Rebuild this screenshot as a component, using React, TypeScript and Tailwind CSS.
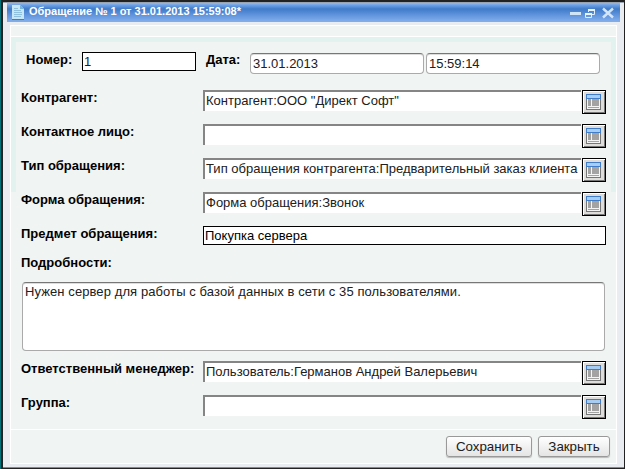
import type { ReactNode } from 'react';

function TableIcon() {
  return (
    <svg className="shrink-0" width="16" height="17" viewBox="0 0 16 17" shapeRendering="crispEdges">
      <rect x="0" y="0" width="15" height="16" fill="#777" />
      <rect x="1" y="5" width="13" height="10" fill="#f4f4f4" />
      <rect x="0" y="0" width="15" height="5" fill="#3f7dca" />
      <rect x="1" y="1" width="13" height="3" fill="#a8cdf2" />
      <rect x="2" y="5" width="3" height="7" fill="#a3a3a3" />
      <rect x="6" y="5" width="7" height="7" fill="#a3a3a3" />
      <rect x="2" y="13" width="11" height="1" fill="#a3a3a3" />
    </svg>
  );
}

function Label({ children }: { children: ReactNode }) {
  return <div className="w-[182px] shrink-0 whitespace-nowrap font-bold leading-4 text-black">{children}</div>;
}

function LookupRow({ label, value = '' }: { label: string; value?: string }) {
  return (
    <div className="flex h-[34px] items-start">
      <Label>{label}</Label>
      <div className="flex h-[21px] w-[378px] items-start whitespace-nowrap border-l-2 border-t-2 border-[#858585] bg-white pl-px pt-px leading-4">
        {value}
      </div>
      <button className="ml-px flex h-6 w-6 shrink-0 items-start border border-black bg-[#deddda] pl-[3px] pt-[3px] shadow-[inset_1px_1px_0_#fff,inset_-1px_-1px_0_#777]">
        <TableIcon />
      </button>
    </div>
  );
}

const rounded =
  'rounded-[4px] border border-[#aaa] border-t-[#777] bg-white shadow-[inset_0_1px_0_#ddd]';
const action =
  'flex h-[21px] items-center justify-center rounded-[3px] border border-[#999] bg-gradient-to-b from-white to-[#e4e4e4] text-[13.33px] leading-4 shadow-[0_1px_1px_#bbb]';

export default function App() {
  return (
    <div className="flex h-[469px] w-[625px] overflow-hidden border-l border-[#007078] bg-[#222] pb-px pl-[2px] pr-px pt-[2px] font-['Liberation_Sans',Arial,sans-serif] text-[13px] text-[#202020]">
      <div className="flex w-full flex-col border-b border-t border-b-[#888] border-t-[#99a4b3] bg-[#e9edf2] pl-1 pr-1">
        <header className="flex h-[19px] shrink-0 items-start bg-[linear-gradient(#8fb9ee_0px,#6298df_3px,#407bc9_6px,#6094dc_12px,#80acea_18px)]">
          <svg className="ml-[5px] mt-px" width="12" height="17" viewBox="0 0 12 17">
            <path d="M0 1h8l4 4v10H0z" fill="#c7e7f5" />
            <path d="M8 1v4h4" fill="#76b5dc" />
            <path d="M2 4.5h4M2 6.5h7M2 8.5h8M2 10.5h8M2 12.5h7" stroke="#8fc0de" />
            <path d="M0 15.5h12" stroke="#417bba" />
          </svg>
          <div className="ml-[5px] whitespace-nowrap text-[11px] font-bold leading-4 text-white">
            Обращение № 1 от 31.01.2013 15:59:08*
          </div>
          <svg className="ml-auto mr-[5px]" width="46" height="19" viewBox="0 0 46 19">
            <path d="M1 10.5h11" stroke="#d0e4f8" strokeWidth="3" />
            <path d="M19.5 9V6.5h6v5H23M16.5 10.5h6v4h-6z" fill="none" stroke="#e1eefb" />
            <path d="M19 7h7M16 11h7" fill="none" stroke="#e8f3fc" strokeWidth="2" />
            <path d="M34 5.5l10 9M44 5.5l-10 9" stroke="#d3e5fa" strokeWidth="2.4" />
          </svg>
        </header>
        <main className="ml-[3px] mr-[3px] mt-[3px] h-[439px] w-[607px] shrink-0 border border-white bg-[#f0f4f3]">
          <div className="h-[11px] border-b border-white" />
          <div className="h-[155px] border-x-[5px] border-t-[5px] border-[#e2f2ee]">
            <section className="w-[590px] pl-[5px]">
              <div className="flex h-[48px] items-start">
                <div className="ml-[5px] mt-[10px] w-[56px] font-bold leading-4 text-black">Номер:</div>
                <div className="mt-[10px] flex h-[19px] w-[114px] items-center border border-black bg-white pl-px leading-4">1</div>
                <div className="ml-[10px] mt-[10px] w-11 font-bold leading-4 text-black">Дата:</div>
                <div className={`${rounded} mt-[11px] flex h-[21px] w-[174px] items-center pl-[2px]`}>31.01.2013</div>
                <div className={`${rounded} ml-[2px] mt-[11px] flex h-[21px] w-[174px] items-center pl-[2px]`}>15:59:14</div>
              </div>
              <LookupRow label="Контрагент:" value={'Контрагент:ООО "Директ Софт"'} />
              <LookupRow label="Контактное лицо:" />
              <LookupRow label="Тип обращения:" value="Тип обращения контрагента:Предварительный заказ клиента" />
              <LookupRow label="Форма обращения:" value="Форма обращения:Звонок" />
              <div className="flex h-[29px] items-start">
                <Label>Предмет обращения:</Label>
                <div className="flex h-[19px] w-[403px] shrink-0 items-center border border-black bg-white pl-px leading-4 text-black">Покупка сервера</div>
              </div>
              <Label>Подробности:</Label>
              <div className={`${rounded} ml-px mt-[11px] h-[69px] w-[583px] pl-[2px] pt-px leading-4 tracking-[0.09px]`}>
                Нужен сервер для работы с базой данных в сети с 35 пользователями.
              </div>
              <div className="mt-[10px]">
                <LookupRow label="Ответственный менеджер:" value="Пользователь:Германов Андрей Валерьевич" />
                <LookupRow label="Группа:" />
              </div>
            </section>
          </div>
          <div className="mt-[237px] flex h-[34px] justify-end gap-[6px] border-t border-white pr-[6px] pt-[6px]">
            <button className={`${action} w-[86px]`}>Сохранить</button>
            <button className={`${action} w-[72px]`}>Закрыть</button>
          </div>
        </main>
      </div>
    </div>
  );
}
